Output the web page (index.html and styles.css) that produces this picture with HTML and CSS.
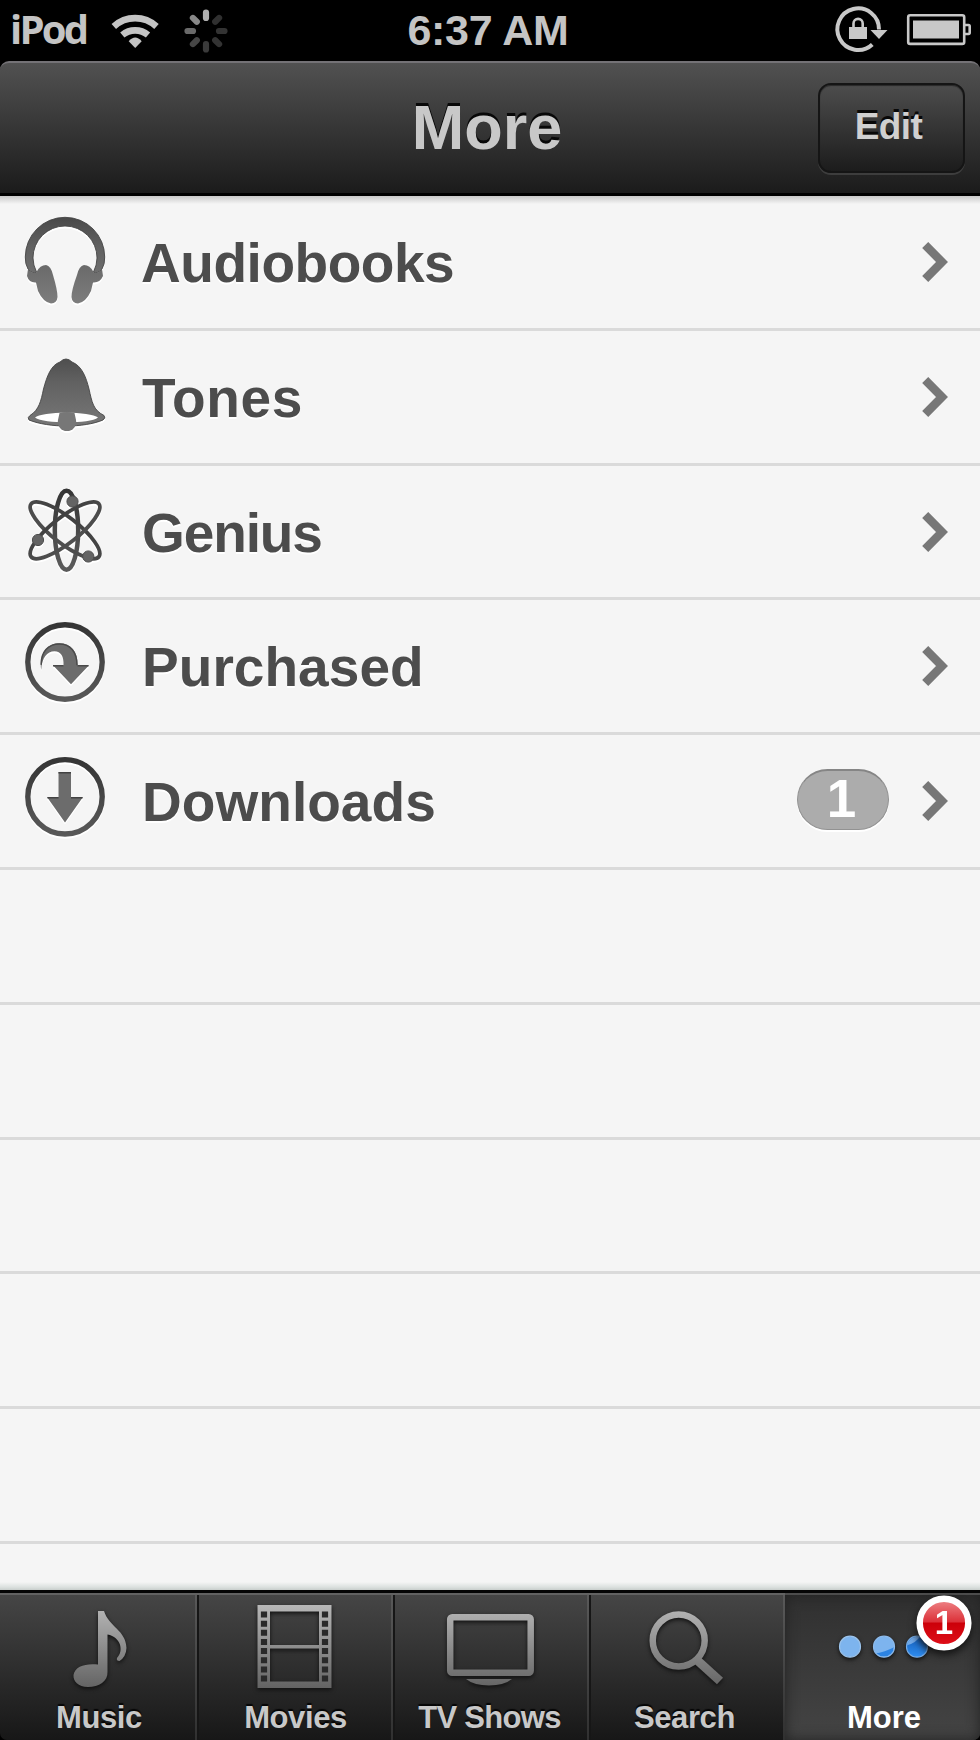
FILE: index.html
```html
<!DOCTYPE html>
<html lang="en">
<head>
<meta charset="utf-8">
<title>More</title>
<link rel="stylesheet" href="styles.css">
</head>
<body>
<svg class="defs" width="0" height="0" aria-hidden="true">
  <defs>
    <linearGradient id="ink" gradientUnits="userSpaceOnUse" x1="0" y1="20" x2="0" y2="108"><stop offset="0" stop-color="#484848"/><stop offset=".35" stop-color="#616161"/><stop offset="1" stop-color="#7d7d7d"/></linearGradient>
    <linearGradient id="ring" gradientUnits="userSpaceOnUse" x1="0" y1="20" x2="0" y2="102"><stop offset="0" stop-color="#333"/><stop offset="1" stop-color="#5a5a5a"/></linearGradient>
    <linearGradient id="steel" gradientUnits="userSpaceOnUse" x1="0" y1="15" x2="0" y2="98"><stop offset="0" stop-color="#b8b8b8"/><stop offset="1" stop-color="#636363"/></linearGradient>
    <linearGradient id="red" x1="0" y1="0" x2="0" y2="1"><stop offset="0" stop-color="#ef8a8c"/><stop offset=".48" stop-color="#dc3038"/><stop offset=".5" stop-color="#cc0009"/><stop offset="1" stop-color="#e0101a"/></linearGradient>
    <linearGradient id="blue" x1="0" y1="0" x2="0" y2="1"><stop offset="0" stop-color="#1460bd"/><stop offset="1" stop-color="#2f8df0"/></linearGradient>
    <clipPath id="dot2"><circle cx="100" cy="56.700" r="10"/></clipPath>
    <clipPath id="dot3"><circle cx="133" cy="56.700" r="10"/></clipPath>
  </defs>
</svg>
<div class="phone">
  <div class="status">
    <div class="status-left">
      <span class="carrier">iPod</span>
      <svg class="wifi" width="50" height="38" viewBox="110 12 50 38"><g fill="none" stroke="#c4c4c4" stroke-width="6.600"><path d="M113.800 26.500A31.500 31.500 0 0 1 156.500 26.500"/><path d="M122.300 35A20 20 0 0 1 148 35"/></g><path d="M135.200 48l-6.500-6.800q6.500-7.500 13 0z" fill="#c4c4c4"/></svg>
      <svg width="44" height="44" viewBox="-22 -22 44 44"><g stroke-width="6.200" stroke-linecap="round"><path d="M0-18.500V-13" stroke="#b0b0b0"/><path d="M0-18.500V-13" stroke="#303030" transform="rotate(45)"/><path d="M0-18.500V-13" stroke="#333" transform="rotate(90)"/><path d="M0-18.500V-13" stroke="#333" transform="rotate(135)"/><path d="M0-18.500V-13" stroke="#3a3a3a" transform="rotate(180)"/><path d="M0-18.500V-13" stroke="#464646" transform="rotate(225)"/><path d="M0-18.500V-13" stroke="#6a6a6a" transform="rotate(270)"/><path d="M0-18.500V-13" stroke="#888" transform="rotate(315)"/></g></svg>
    </div>
    <span class="clock">6:37 AM</span>
    <svg class="status-right" width="150" height="62" viewBox="830 0 150 62">
      <path d="M872.300 44.500A20.800 20.800 0 1 1 879 29.500" fill="none" stroke="#c8c8c8" stroke-width="4"/>
      <path d="M870.500 30H887.500L879 39z" fill="#c8c8c8"/>
      <rect x="849" y="27" width="18" height="12" fill="#c8c8c8"/>
      <path d="M853.500 28V23.500a4.600 4.600 0 0 1 9.200 0V28" fill="none" stroke="#c8c8c8" stroke-width="2.600"/>
      <rect x="908.200" y="15.300" width="56" height="28.600" rx="2" fill="none" stroke="#c8c8c8" stroke-width="2.600"/>
      <rect x="913" y="20.500" width="46" height="18" fill="#c8c8c8"/>
      <path d="M965 25h3.500q1.200 0 1.200 1.500v6q0 1.500-1.200 1.500H965" fill="none" stroke="#c8c8c8" stroke-width="2.600"/>
    </svg>
  </div>
  <header class="nav"><h1 class="title">More</h1><button class="edit">Edit</button></header>
  <main class="list">
    <div class="row">
      <svg class="icon" width="141" height="130" viewBox="0 0 141 130" fill="url(#ink)">
        <g stroke="#444" stroke-width=".9">
        <path d="M28 73Q25 68 25.300 61A39.700 39.700 0 0 1 104.700 61Q105 68 102 73Q97 79 93.500 76Q97 69 97 62A32 32 0 0 0 33 62Q33 69 36.500 76Q33 79 28 73z"/>
        <path d="M28 73Q33 79 36.500 76Q40 69 46 69Q51 70 53 79Q57.500 94 57.500 101Q57 107 51 107.500Q43 106 38 95L36 86.500Q29 87 27 80z" stroke="none"/>
        <path d="M102 73Q97 79 93.500 76Q90 69 84 69Q79 70 77 79Q71.500 94 71.500 101Q72 107 78 107.500Q86 106 91 95L93 86.500Q100 87 103 80z" stroke="none"/>
        </g>
      </svg>
      <span class="name">Audiobooks</span><svg class="chevron" width="28" height="42" viewBox="0 0 28 42"><path d="M4.200 4L21 21L4.200 38"/></svg>
    </div>
    <div class="row">
      <svg class="icon" width="141" height="130" viewBox="0 0 141 130">
        <path d="M66 28Q69 28 72 31C82 35 86 46 89 58C92 71 93 79 104 84.500Q106 87 103 89C84 97 49 97 29 89Q27 86.500 30 84.500C39 79 41 70 43.500 58C47 45 51 34 60 31Q63 28 66 28z" fill="url(#ink)" stroke="#444" stroke-width=".9"/>
        <path d="M35 86.500C41 80 91 80 98 86.500C90 93 44 93 35 86.500z" fill="#fff"/>
        <path d="M59.500 82Q67 80 74.500 82L76 89A9.200 9.200 0 1 1 58 89z" fill="#777"/>
      </svg>
      <span class="name name-tones">Tones</span><svg class="chevron" width="28" height="42" viewBox="0 0 28 42"><path d="M4.200 4L21 21L4.200 38"/></svg>
    </div>
    <div class="row">
      <svg class="icon" width="141" height="130" viewBox="0 0 141 130">
        <g fill="none" stroke="url(#ring)" stroke-width="3.800"><ellipse cx="66.500" cy="64.300" rx="11.700" ry="39.500" stroke-width="4.500"/><ellipse cx="65" cy="64.300" rx="43" ry="13" transform="rotate(38 65 64.300)"/><ellipse cx="65" cy="64.300" rx="43" ry="13" transform="rotate(-38 65 64.300)"/></g>
        <g fill="#646464" stroke="#4d4d4d"><circle cx="72.500" cy="35.500" r="5.600"/><circle cx="38" cy="74" r="5.600"/><circle cx="88.300" cy="90.500" r="5.600"/></g>
      </svg>
      <span class="name name-genius">Genius</span><svg class="chevron" width="28" height="42" viewBox="0 0 28 42"><path d="M4.200 4L21 21L4.200 38"/></svg>
    </div>
    <div class="row">
      <svg class="icon" width="141" height="130" viewBox="0 0 141 130">
        <circle cx="65" cy="62" r="37.200" fill="none" stroke="url(#ring)" stroke-width="5.400"/>
        <g transform="translate(0 .7)"><path d="M71 83.500L53 64.500H63.500C64 56 61 50.500 54.500 50.500C47 50.500 42 57 41.200 69C39 53 47 42.500 59.500 42.500C71 42.500 78 51 77.500 64.500H89z" fill="#6c6c6c"/>
        <path d="M41.200 64C41 51 48 43.200 59.500 43.200C70 43.200 77 51 77 64.500M53 65H63.500M77.500 65H88.500" fill="none" stroke="#4a4a4a" stroke-width="1.500"/></g>
      </svg>
      <span class="name name-long">Purchased</span><svg class="chevron" width="28" height="42" viewBox="0 0 28 42"><path d="M4.200 4L21 21L4.200 38"/></svg>
    </div>
    <div class="row">
      <svg class="icon" width="141" height="130" viewBox="0 0 141 130">
        <circle cx="65" cy="61.800" r="37.200" fill="none" stroke="url(#ring)" stroke-width="5.400"/>
        <path d="M58.500 37H71V62H83L65 87.500L47 62H58.500z" fill="#6c6c6c"/>
        <path d="M58.500 37.700H71M47.500 62.700H58.500M71 62.700H82.500" stroke="#424242" stroke-width="1.500"/>
      </svg>
      <span class="name name-long">Downloads</span><span class="count">1</span><svg class="chevron" width="28" height="42" viewBox="0 0 28 42"><path d="M4.200 4L21 21L4.200 38"/></svg>
    </div>
    <div class="row"></div><div class="row"></div><div class="row"></div><div class="row"></div><div class="row"></div>
  </main>
  <nav class="tabs">
    <div class="tab">
      <svg class="glyph" width="196" height="104" viewBox="0 0 196 104"><path d="M98 21H104C109 37 126 40 126.500 58Q126 67 119.500 71Q116 71 117 68C124 61 121 47 107.500 44.500V82C108 91 99 97 88 97C78 97 73 91 73.500 85C75 76 86 73 98 74.500z" fill="url(#steel)"/></svg>
      <span class="label">Music</span>
    </div>
    <div class="tab">
      <svg class="glyph" width="196" height="104" viewBox="0 0 196 104">
        <path fill="url(#steel)" fill-rule="evenodd" d="M61.500 15H135.500V98H61.500zM74 21.500V55H123V21.500zM74 58.500V91.500H123V58.500z"/>
        <g fill="none" stroke="#292929" stroke-width="6.200" stroke-dasharray="6 3.150"><path d="M68 21.500V92"/><path d="M129 21.500V92"/></g>
      </svg>
      <span class="label">Movies</span>
    </div>
    <div class="tab">
      <svg class="glyph" width="196" height="104" viewBox="0 0 196 104"><rect x="58.200" y="27.300" width="80.500" height="55.500" rx="2" fill="none" stroke="url(#steel)" stroke-width="6.500"/><path d="M74 89H120Q112 95.500 97 95.500Q82 95.500 74 89z" fill="url(#steel)"/></svg>
      <span class="label label-tv">TV Shows</span>
    </div>
    <div class="tab">
      <svg class="glyph" width="196" height="104" viewBox="0 0 196 104"><path d="M110 71L132 91" fill="none" stroke="url(#steel)" stroke-width="9"/><circle cx="90.700" cy="50.500" r="26" fill="none" stroke="url(#steel)" stroke-width="6.500"/></svg>
      <span class="label label-search">Search</span>
    </div>
    <div class="tab tab-active">
      <svg class="glyph" width="195" height="104" viewBox="0 0 195 104">
        <circle cx="66" cy="56.700" r="10.500" fill="#7db4ee" stroke="#9cc4ec" stroke-width="1.200"/>
        <circle cx="100" cy="56.700" r="10.500" fill="#7db4ee"/><path d="M88 64Q102 62 112 56V70H88z" fill="#2c83e2" clip-path="url(#dot2)"/><circle cx="100" cy="56.700" r="10.500" fill="none" stroke="#8dbbec" stroke-width="1.200"/>
        <circle cx="133" cy="56.700" r="10.500" fill="url(#blue)"/><path d="M120 56Q132 54 137 45H120z" fill="#71a9e8" clip-path="url(#dot3)"/><circle cx="133" cy="56.700" r="10.500" fill="none" stroke="#78aee8" stroke-width="1.200"/>
      </svg>
      <span class="label">More</span>
      <span class="alert"><svg class="alert-disc" width="56" height="56" viewBox="0 0 56 56"><circle cx="28" cy="28" r="24.300" fill="url(#red)" stroke="#fff" stroke-width="6.500"/></svg><span class="alert-num">1</span></span>
    </div>
  </nav>
</div>
</body>
</html>
```
FILE: styles.css
```css
* { box-sizing: border-box; }
body { margin: 0; background: #000; font-family: "Liberation Sans", Arial, sans-serif; font-weight: bold; }
.defs { display: block; }
.phone { width: 980px; height: 1740px; display: flex; flex-direction: column; overflow: hidden; }
.status { height: 61px; display: grid; grid-template-columns: 1fr auto 1fr; align-items: center; color: #c4c4c4; flex: none; }
.status-left { display: flex; align-items: center; padding-left: 10px; }
.carrier { width: 100px; font: 700 40px/60px "Open Sans", "Noto Sans", sans-serif; letter-spacing: -2.8px; margin-top: -4px; }
.wifi { margin-right: 24px; }
.clock { font-size: 43px; line-height: 60px; letter-spacing: -.3px; padding-right: 4px; margin-top: -2px; }
.status-right { justify-self: end; }
.nav { height: 135px; flex: none; display: grid; grid-template-columns: 1fr auto 1fr; align-items: center; padding: 0 15px 3px; border-top: 2px solid #747276; border-bottom: 3px solid #000; border-radius: 9px 9px 0 0; background: linear-gradient(#515151, #1b1b1b); }
.title { grid-column: 2; margin: 1px 0 0 -6px; font-size: 63px; line-height: 70px; color: #c8c8c8; text-shadow: 0 -3px 0 #080808; }
.edit { justify-self: end; width: 147px; height: 90px; margin-top: 2px; padding: 0 6px 1px 0; border: 2px solid #151515; border-radius: 13px; background: linear-gradient(#4d4d4d, #1c1c1c); box-shadow: 0 2px 0 #3d3d3d, inset 0 1px 1px #282828; font: bold 37px/44px "Liberation Sans", Arial, sans-serif; letter-spacing: -.6px; color: #d0d0d0; text-shadow: 0 -3px 0 #080808; }
.list { flex: none; height: 1394px; overflow: hidden; background: linear-gradient(#c9c9c9, #f5f5f500 8px), linear-gradient(#f5f5f500 1386px, #dce1df 1391px, #c9cecc), #f5f5f5; }
.row { height: 134.8px; border-bottom: 3px solid #dadada; display: flex; align-items: flex-start; padding-right: 31px; }
.icon { flex: none; filter: drop-shadow(0 2px 0 #fff); }
.name { flex: 1; font-size: 55px; line-height: 62px; letter-spacing: -.45px; padding-top: 36px; color: #4c4c4c; text-shadow: 0 2px 0 #fff; }
.name-tones { letter-spacing: .6px; padding-left: 1px; }
.name-genius { letter-spacing: -1.1px; padding-left: 1px; }
.name-long { letter-spacing: .05px; padding-left: 1px; }
.chevron { flex: none; margin-top: 45px; fill: none; stroke: #777; stroke-width: 8.5px; }
.count { width: 92px; height: 61px; margin: 34px 32px 0 0; border: 1.5px solid #929292; border-top: 2px solid #858585; border-radius: 31px; background: #acacac; box-shadow: 0 2px 0 #fff; color: #fff; font-size: 53px; line-height: 56px; text-align: center; padding-right: 3px; }
.tabs { height: 150px; flex: none; display: grid; grid-template-columns: 197px 196px 196px 196px 195px; border-top: 3px solid #050505; background: linear-gradient(#464646, #171717); border-radius: 0 0 7px 7px; overflow: hidden; }
.tab { position: relative; display: flex; flex-direction: column; align-items: flex-start; border-top: 2px solid #626262; box-shadow: inset 2px 0 0 #161616, inset -2px 0 0 #ffffff1c; }
.tab:first-child { box-shadow: inset -2px 0 0 #ffffff1c; }
.tab-active { border-top-color: #4c4c4c; background: linear-gradient(#303030, #444); box-shadow: inset 0 0 14px #222; }
.glyph { flex: none; margin: -5px 0 0 -1px; filter: drop-shadow(0 2px 2px #111); }
.tab:first-child .glyph { margin-left: 0; }
.label { width: 196px; text-align: center; font-size: 31px; line-height: 36px; margin-top: 6px; padding-left: 1px; letter-spacing: -.4px; color: #c8c8c8; text-shadow: 0 -2px 1px #050505; white-space: nowrap; }
.tab:first-child .label { padding-left: 2px; }
.label-tv { letter-spacing: -.7px; padding: 0 3px 0 0; }
.label-search { padding: 0 5px 0 0; }
.tab-active .label { color: #fff; text-shadow: none; letter-spacing: 0; padding-left: 2px; }
.alert { position: absolute; left: 131px; top: 0; width: 56px; height: 56px; display: grid; place-items: center; filter: drop-shadow(0 4px 4px #111); }
.alert-disc, .alert-num { grid-area: 1 / 1; }
.alert-num { color: #fff; font-size: 33px; line-height: 34px; }
```
